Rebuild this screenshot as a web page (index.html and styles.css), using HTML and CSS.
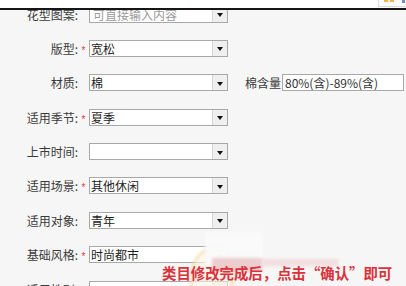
FILE: index.html
```html
<html lang="zh-CN">
<head>
    <meta charset="UTF-8">
    <meta name="viewport" content="width=device-width, initial-scale=1.0">
    <title>商品属性</title>
    <link rel="stylesheet" href="styles.css">
</head>
<body>
    <div class="topbar">
        <div class="tools"><i></i><i></i><b></b></div>
    </div>

    <div class="form">
        <div class="row">
            <label class="lbl">花型图案:</label>
            <span class="req"></span>
            <div class="sel"><span class="val hint">可直接输入内容</span><span class="arrow"></span></div>
        </div>
        <div class="row">
            <label class="lbl">版型:</label>
            <span class="req">*</span>
            <div class="sel"><span class="val">宽松</span><span class="arrow"></span></div>
        </div>
        <div class="row">
            <label class="lbl">材质:</label>
            <span class="req"></span>
            <div class="sel"><span class="val">棉</span><span class="arrow"></span></div>
            <span class="sub-lbl">棉含量</span>
            <div class="txt">80%(含)-89%(含)</div>
        </div>
        <div class="row">
            <label class="lbl">适用季节:</label>
            <span class="req">*</span>
            <div class="sel"><span class="val">夏季</span><span class="arrow"></span></div>
        </div>
        <div class="row">
            <label class="lbl">上市时间:</label>
            <span class="req"></span>
            <div class="sel"><span class="val"></span><span class="arrow"></span></div>
        </div>
        <div class="row">
            <label class="lbl">适用场景:</label>
            <span class="req">*</span>
            <div class="sel"><span class="val">其他休闲</span><span class="arrow"></span></div>
        </div>
        <div class="row">
            <label class="lbl">适用对象:</label>
            <span class="req"></span>
            <div class="sel"><span class="val">青年</span><span class="arrow"></span></div>
        </div>
        <div class="row">
            <label class="lbl">基础风格:</label>
            <span class="req">*</span>
            <div class="sel"><span class="val">时尚都市</span><span class="arrow"></span></div>
        </div>
        <div class="row">
            <label class="lbl">适用性别:</label>
            <span class="req"></span>
            <div class="sel"><span class="val"></span><span class="arrow"></span></div>
        </div>
    </div>

    <!-- blurred sticker over the form -->
    <div class="sticker">
        <span class="blob blob-ring"></span>
        <span class="blob blob-white"></span>
        <span class="blob blob-pink"></span>
        <span class="blob blob-pink2"></span>
    </div>
    <p class="tip">类目修改完成后，点击“确认”即可</p>
</body>
</html>
```

FILE: styles.css
```css
/* page */
body {
    margin: 0;
    padding: 0;
    background-color: #f6f6f6;
    font-family: "Noto Sans CJK SC", "Noto Sans", sans-serif;
    font-size: 12px;
    color: #333;
    overflow: hidden;
}

.topbar {
    position: absolute;
    top: 0;
    left: 0;
    right: 0;
    height: 8px;
    background-color: #fff;
    border-bottom: 2px solid #161616;
    z-index: 2;
}

.tools {
    position: absolute;
    top: 0;
    right: 0;
    width: 28px;
    height: 7px;
    border-left: 1px solid #ddd;
    border-bottom: 1px solid #ddd;
    background-color: #fff;
    display: flex;
    gap: 2px;
    padding-left: 5px;
    box-sizing: border-box;
}

.tools i {
    width: 4px;
    height: 2px;
    background-color: #f2b44a;
}

.tools b {
    width: 3px;
    height: 3px;
    margin-left: 6px;
    background-color: #6a8fd8;
}

/* form rows */
.form {
    display: flex;
    flex-direction: column;
    gap: 17.4px;
    padding-top: 5.5px;
}

.row {
    display: flex;
    align-items: center;
    height: 17px;
}

.lbl {
    width: 78px;
    text-align: right;
    white-space: nowrap;
    color: #3a3a3a;
    line-height: 17px;
}

.req {
    width: 11px;
    color: #e0393e;
    font-family: "Liberation Sans", sans-serif;
    font-size: 10px;
    line-height: 1;
    padding-top: 5px;
    text-align: center;
}

.sel {
    width: 139px;
    height: 17px;
    box-sizing: border-box;
    border: 1px solid #a8a8a8;
    background-color: #fff;
    display: flex;
}

.sel .val {
    flex: 1;
    padding-left: 1px;
    line-height: 15px;
    color: #1e1e1e;
}

.sel .hint {
    padding-left: 3px;
    color: #9a9a9a;
}

.arrow {
    width: 15px;
    background-color: #efefef;
    border-left: 1px solid #d6d6d6;
    display: flex;
    align-items: center;
    justify-content: center;
    padding-top: 2px;
    box-sizing: border-box;
}

.arrow::after {
    content: "";
    border-left: 3.5px solid transparent;
    border-right: 3.5px solid transparent;
    border-top: 4px solid #111;
}

.sub-lbl {
    margin-left: 17px;
    width: 37px;
    color: #3a3a3a;
    line-height: 17px;
}

.txt {
    width: 122px;
    height: 17px;
    box-sizing: border-box;
    border: 1px solid #a8a8a8;
    background-color: #fff;
    padding-left: 2px;
    line-height: 15px;
    color: #333;
}

/* overlay tip */
.sticker {
    position: absolute;
    left: 180px;
    top: 228px;
    width: 170px;
    height: 58px;
}

.blob {
    position: absolute;
    filter: blur(1.5px);
}

.blob-white {
    left: 25px;
    top: 4px;
    width: 58px;
    height: 34px;
    background-color: rgba(250, 250, 250, 0.97);
}

.blob-pink {
    left: 32px;
    top: 30px;
    width: 50px;
    height: 14px;
    background-color: rgba(232, 190, 192, 0.75);
}

.blob-pink2 {
    left: 82px;
    top: 31px;
    width: 76px;
    height: 7px;
    background-color: rgba(238, 205, 205, 0.6);
}

.blob-ring {
    left: 10px;
    top: 20px;
    width: 40px;
    height: 56px;
    border-radius: 50%;
    border: 2px solid rgba(236, 196, 120, 0.55);
    background-color: rgba(252, 244, 228, 0.6);
}

.tip {
    position: absolute;
    left: 162px;
    top: 265px;
    margin: 0;
    font-size: 14.4px;
    font-weight: bold;
    line-height: 15px;
    color: #d9323b;
    white-space: nowrap;
    z-index: 3;
}
```
